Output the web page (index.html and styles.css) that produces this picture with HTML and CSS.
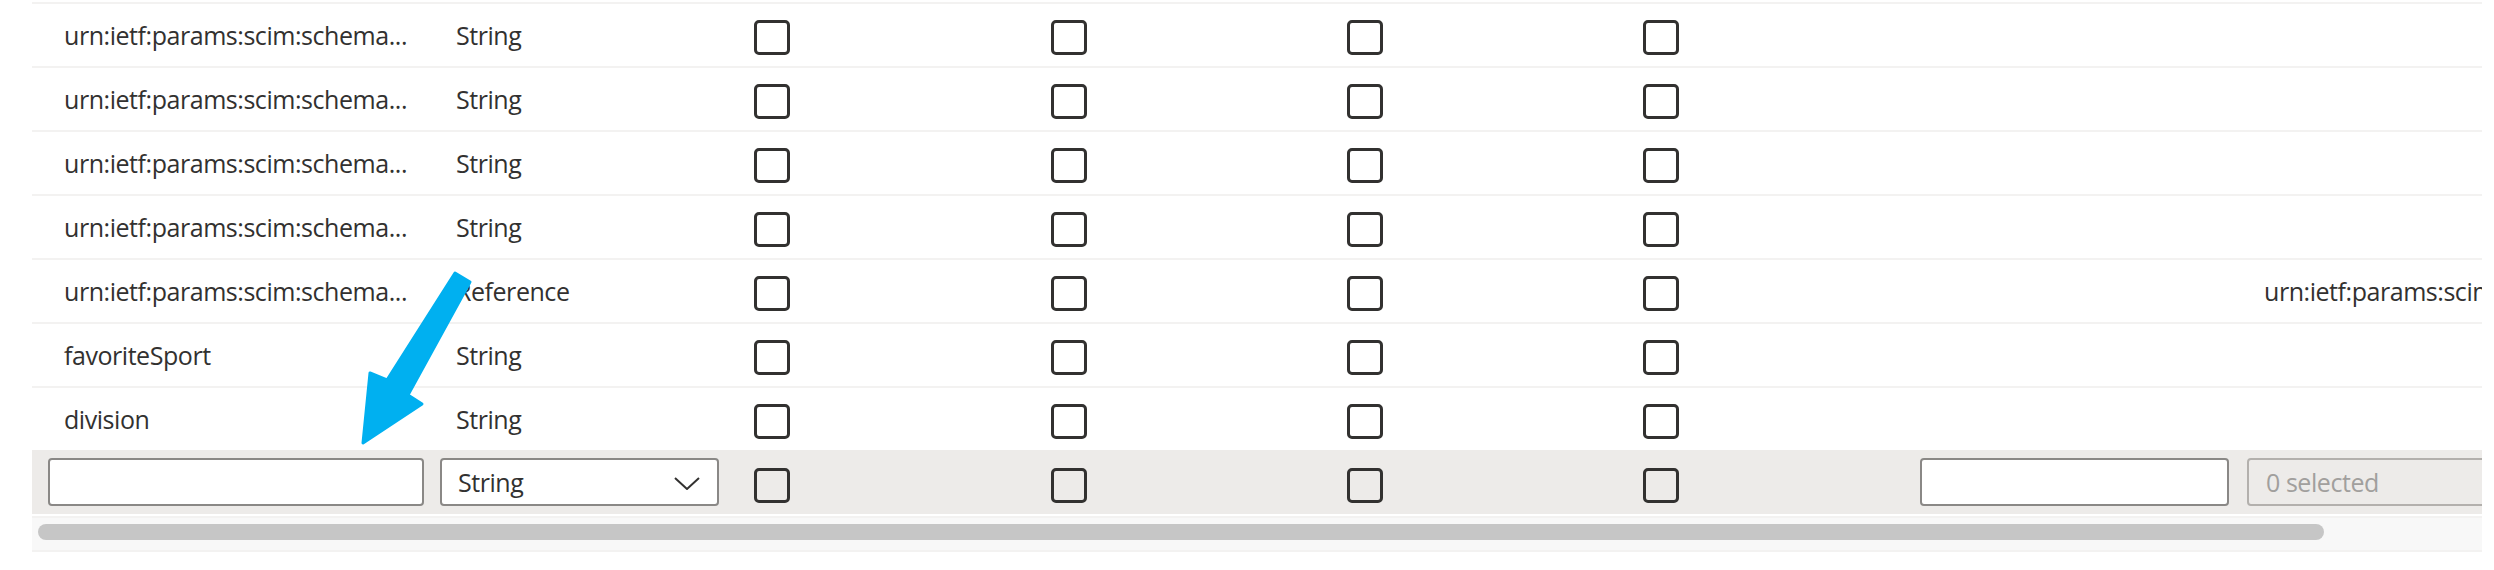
FILE: index.html
```html
<!DOCTYPE html>
<html lang="en">
<head>
<meta charset="utf-8">
<title>Attribute list</title>
<link rel="stylesheet" href="styles.css">
</head>
<body>
<div class="page">
  <div class="grid">
    <div class="row">
      <div class="cell c1"><span class="txt" title="urn:ietf:params:scim:schemas:extension:enterprise:2.0:User:employeeNumber">urn:ietf:params:scim:schema...</span></div>
      <div class="cell c2"><span class="txt">String</span></div>
      <div class="cell c3"><span class="cb"></span></div>
      <div class="cell c4"><span class="cb"></span></div>
      <div class="cell c5"><span class="cb"></span></div>
      <div class="cell c6"><span class="cb"></span></div>
      <div class="cell c7"></div>
      <div class="cell c8"></div>
    </div>
    <div class="row">
      <div class="cell c1"><span class="txt" title="urn:ietf:params:scim:schemas:extension:enterprise:2.0:User:costCenter">urn:ietf:params:scim:schema...</span></div>
      <div class="cell c2"><span class="txt">String</span></div>
      <div class="cell c3"><span class="cb"></span></div>
      <div class="cell c4"><span class="cb"></span></div>
      <div class="cell c5"><span class="cb"></span></div>
      <div class="cell c6"><span class="cb"></span></div>
      <div class="cell c7"></div>
      <div class="cell c8"></div>
    </div>
    <div class="row">
      <div class="cell c1"><span class="txt" title="urn:ietf:params:scim:schemas:extension:enterprise:2.0:User:organization">urn:ietf:params:scim:schema...</span></div>
      <div class="cell c2"><span class="txt">String</span></div>
      <div class="cell c3"><span class="cb"></span></div>
      <div class="cell c4"><span class="cb"></span></div>
      <div class="cell c5"><span class="cb"></span></div>
      <div class="cell c6"><span class="cb"></span></div>
      <div class="cell c7"></div>
      <div class="cell c8"></div>
    </div>
    <div class="row">
      <div class="cell c1"><span class="txt" title="urn:ietf:params:scim:schemas:extension:enterprise:2.0:User:department">urn:ietf:params:scim:schema...</span></div>
      <div class="cell c2"><span class="txt">String</span></div>
      <div class="cell c3"><span class="cb"></span></div>
      <div class="cell c4"><span class="cb"></span></div>
      <div class="cell c5"><span class="cb"></span></div>
      <div class="cell c6"><span class="cb"></span></div>
      <div class="cell c7"></div>
      <div class="cell c8"></div>
    </div>
    <div class="row">
      <div class="cell c1"><span class="txt" title="urn:ietf:params:scim:schemas:extension:enterprise:2.0:User:manager">urn:ietf:params:scim:schema...</span></div>
      <div class="cell c2"><span class="txt">Reference</span></div>
      <div class="cell c3"><span class="cb"></span></div>
      <div class="cell c4"><span class="cb"></span></div>
      <div class="cell c5"><span class="cb"></span></div>
      <div class="cell c6"><span class="cb"></span></div>
      <div class="cell c7"></div>
      <div class="cell c8"><span class="txt">urn:ietf:params:scim</span></div>
    </div>
    <div class="row">
      <div class="cell c1"><span class="txt">favoriteSport</span></div>
      <div class="cell c2"><span class="txt">String</span></div>
      <div class="cell c3"><span class="cb"></span></div>
      <div class="cell c4"><span class="cb"></span></div>
      <div class="cell c5"><span class="cb"></span></div>
      <div class="cell c6"><span class="cb"></span></div>
      <div class="cell c7"></div>
      <div class="cell c8"></div>
    </div>
    <div class="row">
      <div class="cell c1"><span class="txt">division</span></div>
      <div class="cell c2"><span class="txt">String</span></div>
      <div class="cell c3"><span class="cb"></span></div>
      <div class="cell c4"><span class="cb"></span></div>
      <div class="cell c5"><span class="cb"></span></div>
      <div class="cell c6"><span class="cb"></span></div>
      <div class="cell c7"></div>
      <div class="cell c8"></div>
    </div>
    <div class="row new-row">
      <div class="cell c1"><input class="field name-field" type="text" aria-label="Name"></div>
      <div class="cell c2">
        <div class="select">
          <span class="select-value">String</span>
          <svg class="chevron" viewBox="0 0 26 13" width="26" height="13"><path d="M1 1 L13 12 L25 1" fill="none" stroke="#323130" stroke-width="2"/></svg>
        </div>
      </div>
      <div class="cell c3"><span class="cb"></span></div>
      <div class="cell c4"><span class="cb"></span></div>
      <div class="cell c5"><span class="cb"></span></div>
      <div class="cell c6"><span class="cb"></span></div>
      <div class="cell c7"><input class="field default-field" type="text" aria-label="Default value"></div>
      <div class="cell c8"><div class="multi">0 selected</div></div>
    </div>
  </div>
  <div class="scrollbar"><div class="thumb"></div></div>
</div>
<svg class="arrow" viewBox="0 0 2494 570" width="2494" height="570">
  <polygon points="455,273 470,282 408,395 422,404 363,443 370,373 387,380" fill="#00b0f0" stroke="#00b0f0" stroke-width="3" stroke-linejoin="round"/>
</svg>
</body>
</html>
```

FILE: styles.css
```css
html, body {
  margin: 0;
  padding: 0;
  background: #ffffff;
}

body {
  width: 2494px;
  height: 570px;
  overflow: hidden;
  position: relative;
  font-family: "Open Sans", "Noto Sans", sans-serif;
  font-size: 25px;
  letter-spacing: -0.45px;
  color: #323130;
}

.page {
  padding: 2px 12px 0 32px;
}

.grid {
  width: 2450px;
  overflow: hidden;
}

.row {
  display: grid;
  grid-template-columns: 408px 295px 296px 297px 296px 280px 343px 600px;
  width: 3015px;
  height: 62px;
  border-top: 2px solid #f3f2f1;
  align-items: center;
}

.new-row {
  height: 64px;
  border-top: 0;
  background: #edebe9;
}

.cell {
  display: flex;
  align-items: center;
  min-width: 0;
  height: 100%;
  box-sizing: border-box;
  overflow: hidden;
}

.c1 { padding-left: 16px; padding-right: 16px; }
.c2 { padding-left: 0; }
.c3, .c5, .c6 { padding-left: 19px; }
.c4 { padding-left: 20px; }
.c7 { padding-left: 16px; }
.c8 { padding-left: 0; }

.txt {
  padding-left: 16px;
  white-space: nowrap;
  line-height: 30px;
}

.c8 .txt {
  padding-left: 17px;
}

.cb {
  display: block;
  width: 36px;
  height: 35px;
  box-sizing: border-box;
  border: 3px solid #323130;
  border-radius: 5px;
  margin-top: 5px;
}

.new-row .cb {
  margin-top: 7px;
}

.field {
  display: block;
  box-sizing: border-box;
  height: 48px;
  margin: 0;
  border: 2px solid #8a8886;
  border-radius: 4px;
  background: #ffffff;
  font: inherit;
  padding: 0 14px;
}

.name-field { width: 376px; }
.default-field { width: 309px; }

.select {
  box-sizing: border-box;
  width: 279px;
  height: 48px;
  border: 2px solid #8a8886;
  border-radius: 4px;
  background: #ffffff;
  display: flex;
  align-items: center;
  justify-content: space-between;
  padding: 0 17px 0 16px;
}

.select-value {
  line-height: 30px;
}

.chevron {
  display: block;
  margin-top: 2px;
}

.multi {
  box-sizing: border-box;
  width: 320px;
  height: 48px;
  border: 2px solid #b3b0ad;
  border-radius: 4px;
  color: #a19f9d;
  display: flex;
  align-items: center;
  padding-left: 17px;
  white-space: nowrap;
}

.scrollbar {
  width: 2450px;
  margin-top: 2px;
  height: 26px;
  border-top: 2px solid #f3f2f1;
  border-bottom: 2px solid #f3f2f1;
  background: #f8f8f8;
  padding-top: 6px;
  box-sizing: content-box;
}

.thumb {
  margin-left: 6px;
  width: 2286px;
  height: 16px;
  border-radius: 8px;
  background: #c6c6c6;
}

.arrow {
  position: absolute;
  left: 0;
  top: 0;
  pointer-events: none;
}
```
